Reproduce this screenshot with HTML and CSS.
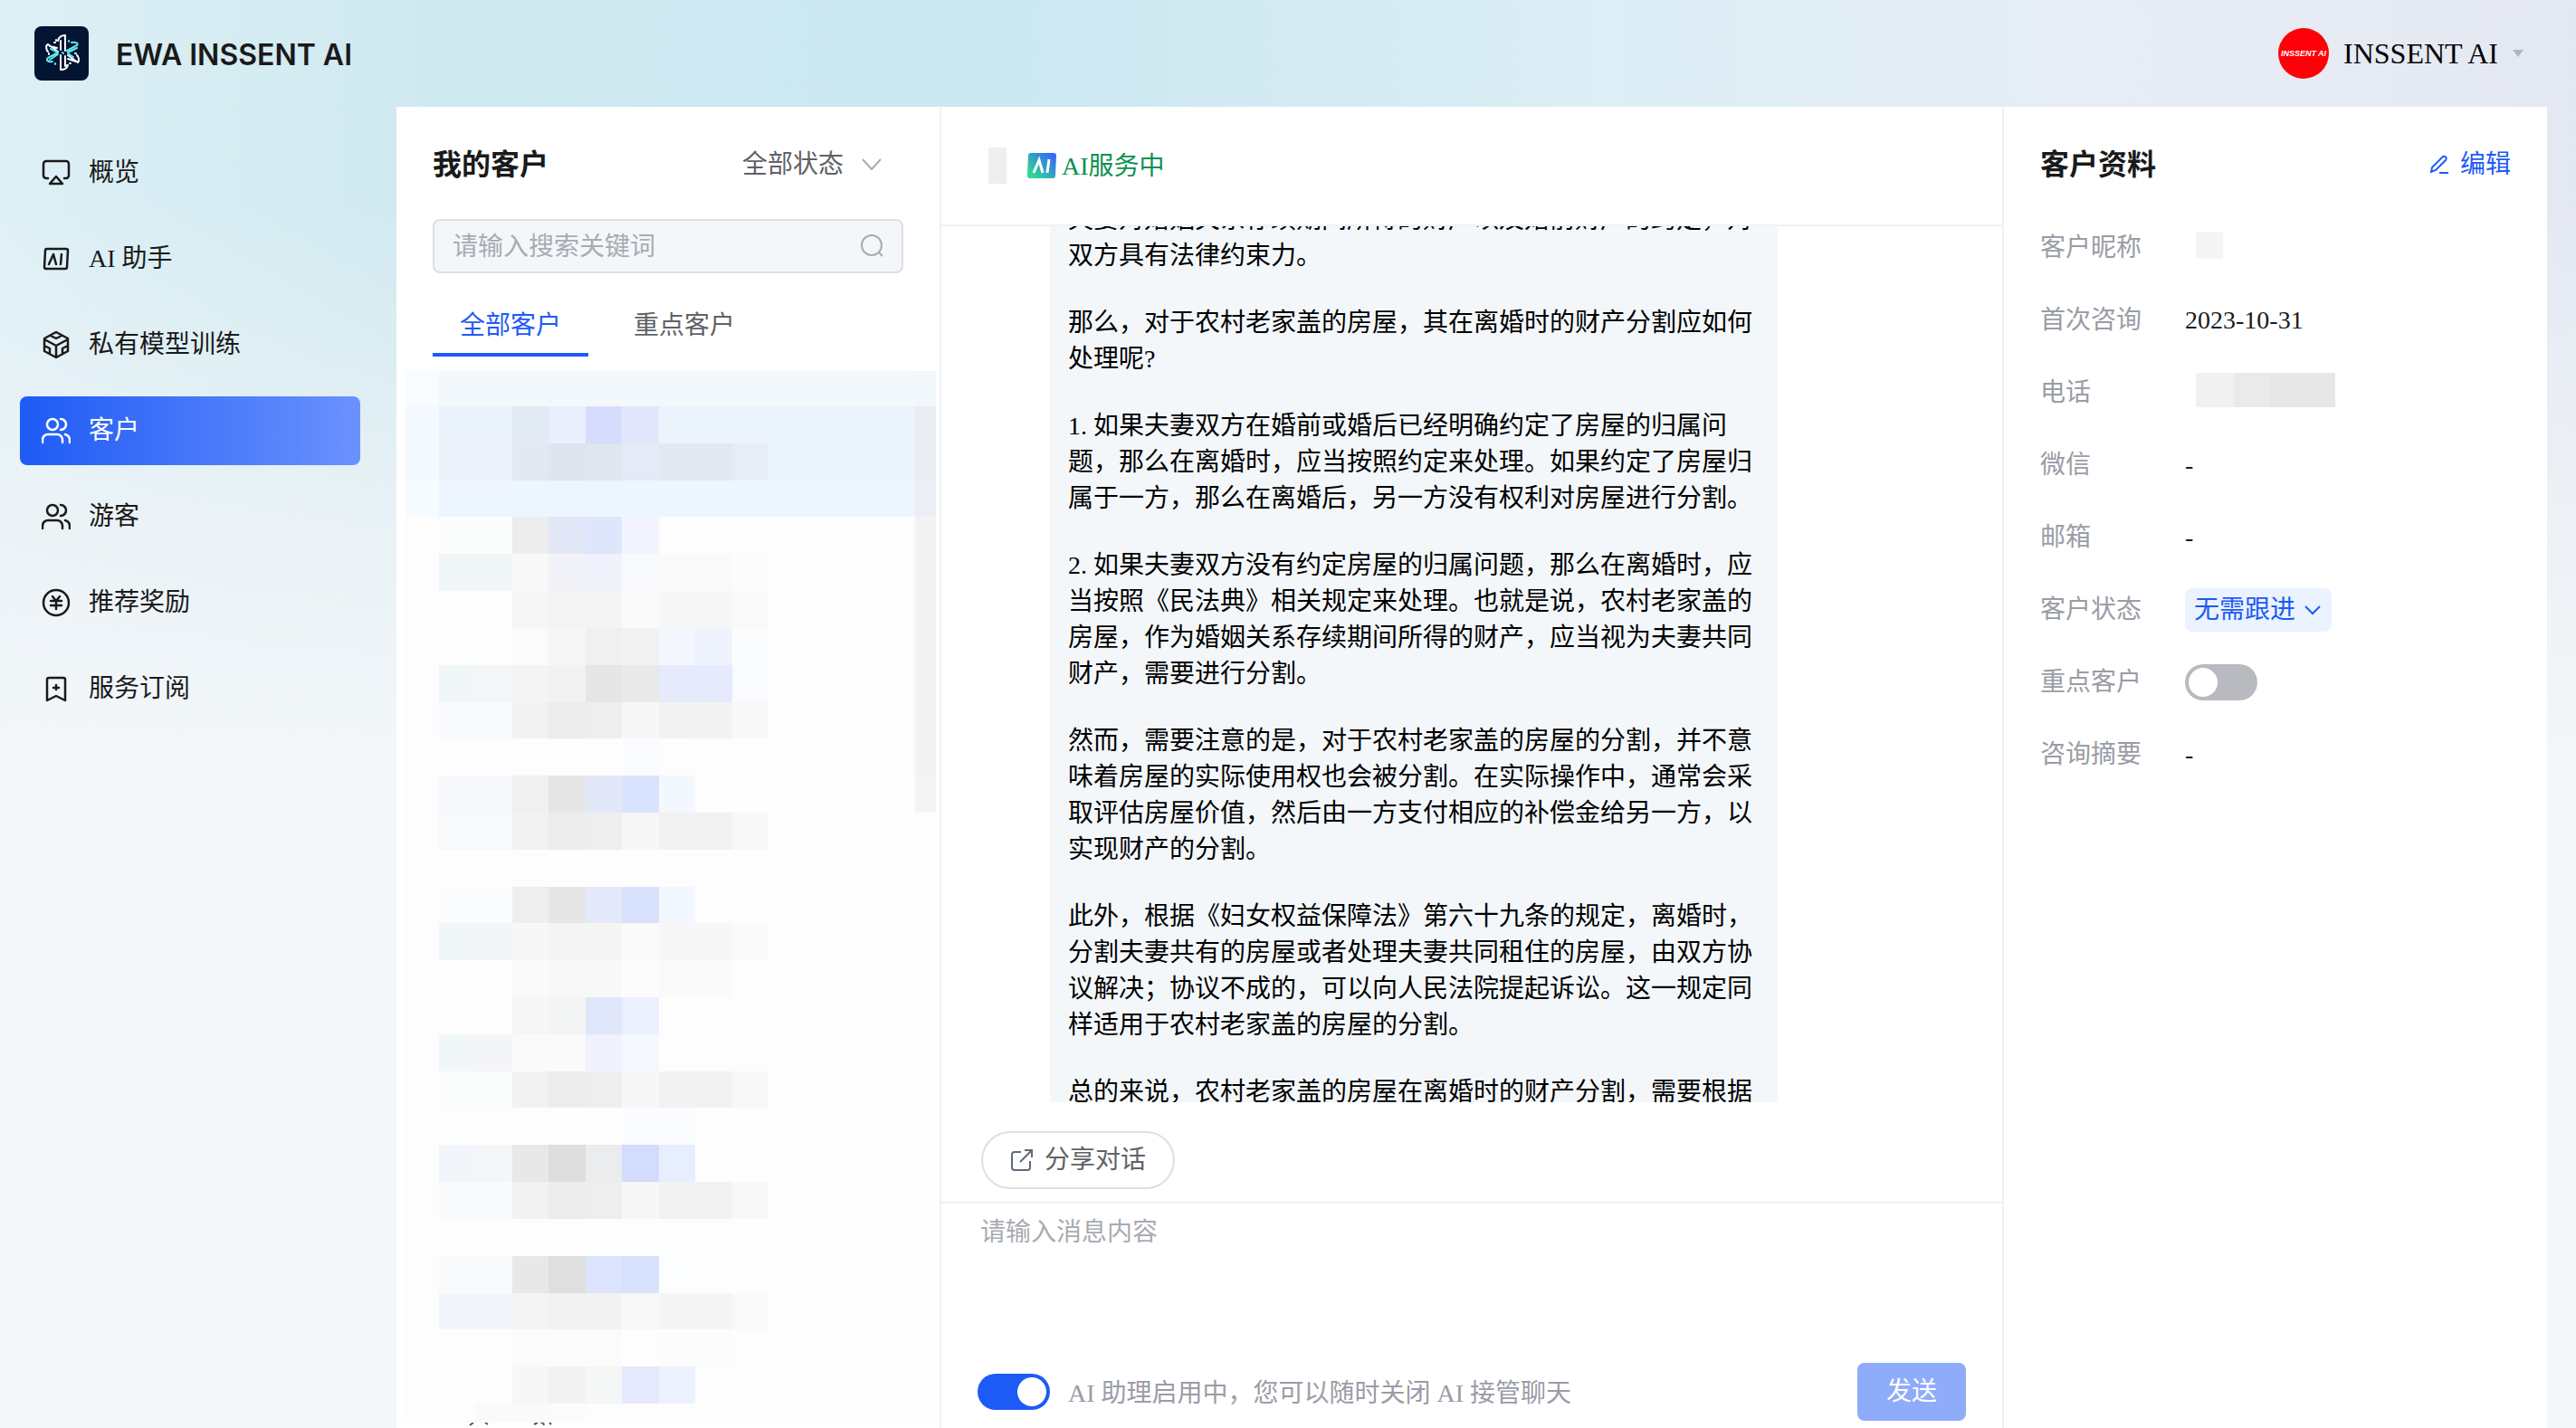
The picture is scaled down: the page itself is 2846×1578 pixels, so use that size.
FILE: index.html
```html
<!DOCTYPE html>
<html lang="zh-CN">
  <head>
    <meta charset="UTF-8">
    <title>EWA INSSENT AI</title>
    <link rel="stylesheet" href="styles.css">
  </head>
  <body>
    <header class="topbar">
      <a class="brand" href="#">
        <svg class="brand-logo" viewBox="0 0 60 60">
          <rect width="60" height="60" rx="8" fill="#021533"/>
          <g fill="none" stroke-width="2" stroke-linecap="round" stroke-linejoin="round">
            <path stroke="#fff" d="M29 26V16M26 16c1-4 4-6 8-6v17M34 33v11M37 43c-1 4-4 5-8 5V32M26 28l-11-8c-3 1-2 6 0 8M17 22l8 2M37 32l11 8c2-2 1-6-1-8M46 39l-9-3"/>
            <path stroke="#5fe8ee" d="M36 27l11-6c2-2-1-4-6-3M37 29l10-5M37 30l6 4M18 25l8 4-11 6c-3 2 0 5 5 4M26 31l-9 6M31 29l1 1"/>
            <path stroke="#fff" d="M24 15v1M22 18h1M16 30v1M36 43v1M39 41h1M45 30h1"/>
            <path stroke="#5fe8ee" d="M38 16v1M23 41v1"/>
          </g>
        </svg>
        <span class="brand-name">EWA INSSENT AI</span>
      </a>
      <button class="account" type="button">
        <span class="avatar">INSSENT AI</span>
        <span>INSSENT AI</span>
        <svg class="caret" viewBox="0 0 12 10"><path d="M0 1h12L6 9z" fill="#b1b5bf"/></svg>
      </button>
    </header>

    <div class="layout">
      <nav class="sidebar">
        <a class="nav-item" href="#">
          <svg class="icon" viewBox="0 0 32 32"><path d="M7 22H5a3 3 0 0 1-3-3V6a3 3 0 0 1 3-3h22a3 3 0 0 1 3 3v13a3 3 0 0 1-3 3h-2M16 20l-7 8h14z"/></svg>
          <span>概览</span>
        </a>
        <a class="nav-item" href="#">
          <svg class="icon" viewBox="0 0 32 32"><path d="M6 5h21a2 2 0 0 1 2 2l-1 18a2 2 0 0 1-2 2H5a2 2 0 0 1-2-2L4 7a2 2 0 0 1 2-2zM8 22l5-11 3 11M22 11l-1 11"/></svg>
          <span>AI 助手</span>
        </a>
        <a class="nav-item" href="#">
          <svg class="icon" viewBox="0 0 32 32"><path d="M16 2l13 7v14l-13 7-13-7V9zM3 10l13 7 13-7M16 17v13M10 6l6 3 6-3M3 17l6 3v6M29 17l-6 3v6"/></svg>
          <span>私有模型训练</span>
        </a>
        <a class="nav-item active" href="#">
          <svg class="icon" viewBox="0 0 32 32"><circle cx="12" cy="9" r="6"/><path d="M1 29v-3a6 6 0 0 1 6-6h10a6 6 0 0 1 6 6v3M21 3a6 6 0 0 1 0 12M26 20c3 1 5 3 5 6v3"/></svg>
          <span>客户</span>
        </a>
        <a class="nav-item" href="#">
          <svg class="icon" viewBox="0 0 32 32"><circle cx="12" cy="9" r="6"/><path d="M1 29v-3a6 6 0 0 1 6-6h10a6 6 0 0 1 6 6v3M21 3a6 6 0 0 1 0 12M26 20c3 1 5 3 5 6v3"/></svg>
          <span>游客</span>
        </a>
        <a class="nav-item" href="#">
          <svg class="icon" viewBox="0 0 32 32"><circle cx="16" cy="16" r="14"/><path d="M12 9l4 5 4-5M10 14h12M10 19h12M16 14v9"/></svg>
          <span>推荐奖励</span>
        </a>
        <a class="nav-item" href="#">
          <svg class="icon" viewBox="0 0 32 32"><path d="M6 29V6a2 2 0 0 1 2-2h16a2 2 0 0 1 2 2v23l-10-5zM16 12v5M13 15h6"/></svg>
          <span>服务订阅</span>
        </a>
      </nav>

      <main class="workspace">
        <section class="customers">
          <div class="customers-head">
            <h2>我的客户</h2>
            <select class="status-filter" aria-label="状态">
              <option>全部状态</option>
            </select>
            <svg class="chevron" viewBox="0 0 22 14"><path d="M1 1l10 11L21 1"/></svg>
          </div>
          <div class="search">
            <input type="text" placeholder="请输入搜索关键词" aria-label="搜索">
            <svg viewBox="0 0 26 26"><circle cx="13" cy="12" r="11"/><path d="M21 20l4 4"/></svg>
          </div>
          <div class="tabs">
            <button class="tab active" type="button">全部客户</button>
            <button class="tab" type="button">重点客户</button>
          </div>
          <div class="mosaic" id="customer-list"></div>
          <svg class="list-edge" viewBox="0 0 100 6"><path d="M1 3l4-3M18 0l3 2M72 2l4-2M79 0h3l1 3M89 0l2 2"/></svg>
        </section>

        <section class="chat">
          <div class="chat-head">
            <span class="chat-name"></span>
            <svg class="ai-badge" viewBox="0 0 32 28">
              <defs>
                <linearGradient id="badge" x1="0" y1="1" x2="1" y2="0">
                  <stop offset="0.1" stop-color="#2fdc8c"/>
                  <stop offset="0.9" stop-color="#3569fb"/>
                </linearGradient>
              </defs>
              <path d="M4 0h25a3 3 0 0 1 3 3l-1 22a3 3 0 0 1-3 3H3a3 3 0 0 1-3-3L1 3a3 3 0 0 1 3-3z" fill="url(#badge)"/>
              <path d="M7 22l6-14 4 14M24 7l-2 15" fill="none" stroke="#fff" stroke-width="3"/>
            </svg>
            <span class="chat-status">AI服务中</span>
          </div>
          <div class="messages" id="messages">
            <div class="bubble">
              <p>夫妻对婚姻关系存续期间所得的财产以及婚前财产的约定，对双方具有法律约束力。</p>
              <p>那么，对于农村老家盖的房屋，其在离婚时的财产分割应如何处理呢?</p>
              <p>1. 如果夫妻双方在婚前或婚后已经明确约定了房屋的归属问题，那么在离婚时，应当按照约定来处理。如果约定了房屋归属于一方，那么在离婚后，另一方没有权利对房屋进行分割。</p>
              <p>2. 如果夫妻双方没有约定房屋的归属问题，那么在离婚时，应当按照《民法典》相关规定来处理。也就是说，农村老家盖的房屋，作为婚姻关系存续期间所得的财产，应当视为夫妻共同财产，需要进行分割。</p>
              <p>然而，需要注意的是，对于农村老家盖的房屋的分割，并不意味着房屋的实际使用权也会被分割。在实际操作中，通常会采取评估房屋价值，然后由一方支付相应的补偿金给另一方，以实现财产的分割。</p>
              <p>此外，根据《妇女权益保障法》第六十九条的规定，离婚时，分割夫妻共有的房屋或者处理夫妻共同租住的房屋，由双方协议解决；协议不成的，可以向人民法院提起诉讼。这一规定同样适用于农村老家盖的房屋的分割。</p>
              <p>总的来说，农村老家盖的房屋在离婚时的财产分割，需要根据</p>
            </div>
          </div>
          <div class="chat-tools">
            <button class="share" type="button">
              <svg viewBox="0 0 26 26"><path d="M12 4H5a3 3 0 0 0-3 3v14a3 3 0 0 0 3 3h14a3 3 0 0 0 3-3v-7M16 2h8v8M24 2L11 15"/></svg>
              <span>分享对话</span>
            </button>
          </div>
          <div class="composer">
            <textarea placeholder="请输入消息内容" aria-label="消息内容"></textarea>
            <div class="composer-foot">
              <input class="switch" id="ai-on" type="checkbox" checked>
              <label for="ai-on">AI 助理启用中，您可以随时关闭 AI 接管聊天</label>
              <button class="send" type="button">发送</button>
            </div>
          </div>
        </section>

        <section class="profile">
          <div class="profile-head">
            <h2>客户资料</h2>
            <button class="edit" type="button">
              <svg viewBox="0 0 22 22"><path d="M2 19l1-5L15 2c2-1 5 1 3 4L7 17zM11 20h10"/></svg>
              <span>编辑</span>
            </button>
          </div>
          <dl class="fields">
            <dt>客户昵称</dt>
            <dd><span class="masked masked-name"></span></dd>
            <dt>首次咨询</dt>
            <dd>2023-10-31</dd>
            <dt>电话</dt>
            <dd><span class="masked masked-phone"></span></dd>
            <dt>微信</dt>
            <dd>-</dd>
            <dt>邮箱</dt>
            <dd>-</dd>
            <dt><label for="state">客户状态</label></dt>
            <dd>
              <span class="state">
                <select id="state">
                  <option>无需跟进</option>
                </select>
                <svg class="chevron" viewBox="0 0 22 14"><path d="M3 3l8 8 8-8"/></svg>
              </span>
            </dd>
            <dt><label for="vip">重点客户</label></dt>
            <dd><input class="switch" id="vip" type="checkbox"></dd>
            <dt>咨询摘要</dt>
            <dd>-</dd>
          </dl>
        </section>
      </main>
    </div>

    <script src="script.js"></script>
  </body>
</html>
```
FILE: styles.css
```css
*{
  box-sizing: border-box;
}
html, body{
  margin: 0;
  padding: 0;
  height: 100%;
}
body{
  display: flex;
  flex-flow: column;
  overflow: hidden;
  font-family: "Liberation Serif", "Noto Sans CJK SC", serif;
  font-size: 28px;
  line-height: 40px;
  color: #1a1a1a;
  text-spacing-trim: space-all;
  background:
    linear-gradient(to bottom, rgba(244,247,249,0) 14%, rgba(240,244,247,0.8) 38%, #f3f7fa 54%),
    linear-gradient(to right, #def0f6 0%, #cfe9f0 17%, #cae7f0 38%, #dceef6 62%, #e7edf5 82%, #e4e8f2 100%);
}
button, input, select, textarea{
  font: inherit;
  color: inherit;
  margin: 0;
  padding: 0;
  border: 0;
  background: none;
  outline: none;
}
button{
  cursor: pointer;
}
select{
  appearance: none;
}
a{
  color: inherit;
  text-decoration: none;
}
h2{
  margin: 0;
  font-size: 32px;
  line-height: 40px;
  font-weight: 700;
}
svg{
  display: block;
  flex: none;
}

/* top bar */
.topbar{
  display: flex;
  align-items: center;
  justify-content: space-between;
  flex: none;
  height: 118px;
  padding: 0 58px 0 38px;
}
.brand{
  display: flex;
  align-items: center;
  gap: 30px;
}
.brand-logo{
  width: 60px;
  height: 60px;
}
.brand-name{
  padding-top: 4px;
  font-family: Inter, "Liberation Sans", sans-serif;
  font-size: 32px;
  font-weight: 600;
}
.account{
  display: flex;
  align-items: center;
  gap: 16px;
  font-size: 32px;
  color: #000;
}
.avatar{
  display: flex;
  align-items: center;
  justify-content: center;
  width: 56px;
  height: 56px;
  border-radius: 50%;
  background: #ff0008;
  color: #fff;
  font-family: "Liberation Sans", sans-serif;
  font-size: 9px;
  font-weight: 700;
  font-style: italic;
  white-space: nowrap;
}
.caret{
  width: 12px;
  height: 10px;
}

.layout{
  display: flex;
  flex: 1;
  min-height: 0;
}

/* side menu */
.sidebar{
  display: flex;
  flex-flow: column;
  gap: 19px;
  flex: none;
  width: 438px;
  padding: 35px 40px 0 22px;
}
.nav-item{
  display: flex;
  align-items: center;
  gap: 20px;
  height: 76px;
  padding: 0 24px;
  border-radius: 8px;
}
.nav-item.active{
  color: #fff;
  background: linear-gradient(to right, #1e5af5, #6b92fe);
}
.icon{
  width: 32px;
  height: 32px;
  fill: none;
  stroke: currentColor;
  stroke-width: 2.5;
  stroke-linecap: round;
  stroke-linejoin: round;
}

/* three panels */
.workspace{
  display: flex;
  flex: 1;
  min-width: 0;
  margin-right: 32px;
  background: #fff;
}
.customers{
  display: flex;
  flex-flow: column;
  flex: none;
  width: 602px;
  padding-top: 44px;
  border-right: 2px solid #eef2f6;
}
.customers-head{
  display: flex;
  align-items: center;
  padding: 0 64px 0 40px;
}
.status-filter{
  width: 112px;
  margin-left: auto;
  color: #606266;
}
.chevron{
  width: 22px;
  height: 14px;
  margin-left: 20px;
  fill: none;
  stroke: #a8abb2;
  stroke-width: 2;
}
.search{
  display: flex;
  align-items: center;
  height: 60px;
  margin: 40px 40px 0;
  padding: 0 20px;
  border: 2px solid #dcdfe6;
  border-radius: 8px;
  background: #f3f7fa;
}
.search input{
  flex: 1;
  min-width: 0;
  padding-top: 2px;
}
::placeholder{
  color: #a8abb2;
  opacity: 1;
}
.search svg{
  width: 26px;
  height: 26px;
  fill: none;
  stroke: #a8abb2;
  stroke-width: 2;
}
.tabs{
  display: flex;
  gap: 20px;
  padding: 20px 40px 16px;
}
.tab{
  height: 72px;
  padding: 8px 30px 0;
  border-bottom: 4px solid transparent;
  color: #606266;
}
.tab.active{
  color: #1e5af5;
  border-color: #1e5af5;
}
.mosaic{
  display: grid;
  grid-template-columns: 37px repeat(13, 1fr) 23px;
  grid-template-rows: 39px repeat(27, 1fr) 21px;
  flex: 1;
  min-height: 0;
  margin: 0 4px 0 10px;
  background: #fdfdfd;
}
.list-edge{
  width: 100px;
  height: 6px;
  margin-left: 80px;
  fill: none;
  stroke: #555;
  stroke-width: 2;
}

/* conversation */
.chat{
  display: flex;
  flex-flow: column;
  flex: 1;
  min-width: 0;
  border-right: 2px solid #eef2f6;
}
.chat-head{
  display: flex;
  align-items: center;
  flex: none;
  height: 132px;
  padding-left: 52px;
  border-bottom: 2px solid #eef2f6;
}
.chat-name{
  width: 20px;
  height: 40px;
  margin-right: 23px;
  background: #eee;
}
.ai-badge{
  width: 32px;
  height: 28px;
  margin-right: 6px;
}
.chat-status{
  padding-top: 2px;
  color: #0b9150;
}
.messages{
  flex: 1;
  min-height: 0;
  overflow: hidden;
  padding: 0 248px 0 120px;
}
.bubble{
  padding: 20px;
  background: #f3f7fa;
  color: #000;
}
.bubble p{
  margin: 0 0 34px;
}
.bubble p:last-child{
  margin: 0;
}
.chat-tools{
  flex: none;
  padding: 32px 44px 14px;
}
.share{
  display: flex;
  align-items: center;
  gap: 12px;
  height: 64px;
  padding: 0 30px;
  border: 2px solid #dcdfe6;
  border-radius: 32px;
  color: #606266;
}
.share svg{
  width: 26px;
  height: 26px;
  fill: none;
  stroke: #606a78;
  stroke-width: 2;
}
.composer{
  display: flex;
  flex-flow: column;
  flex: none;
  height: 250px;
  padding: 12px 40px 8px;
  border-top: 2px solid #eef2f6;
}
.composer textarea{
  flex: 1;
  padding: 0 3px;
  resize: none;
}
.composer-foot{
  display: flex;
  align-items: center;
  color: #9a9ca6;
}
.composer-foot label{
  margin-left: 20px;
  padding-top: 4px;
}
.switch{
  appearance: none;
  flex: none;
  display: block;
  width: 80px;
  height: 40px;
  padding: 4px;
  border-radius: 20px;
  background: #b9babf;
}
.switch::before{
  content: "";
  display: block;
  width: 32px;
  height: 32px;
  border-radius: 50%;
  background: #fff;
}
.switch:checked{
  background: #1e5af5;
}
.switch:checked::before{
  margin-left: auto;
}
.send{
  width: 120px;
  height: 64px;
  margin-left: auto;
  border-radius: 8px;
  color: #fff;
  background: #8facfa;
}

/* customer profile */
.profile{
  flex: none;
  width: 600px;
  padding: 44px 40px 0;
}
.profile-head{
  display: flex;
  align-items: center;
  justify-content: space-between;
}
.edit{
  display: flex;
  align-items: center;
  gap: 12px;
  color: #1e5af5;
}
.edit svg{
  width: 22px;
  height: 22px;
  fill: none;
  stroke: currentColor;
  stroke-width: 2;
}
.fields{
  display: grid;
  grid-template-columns: 160px 1fr;
  grid-auto-rows: 80px;
  align-items: center;
  margin: 32px 0 0;
}
.fields dt{
  color: #9a9ca6;
}
.fields dd{
  display: flex;
  align-items: center;
  margin: 0;
}
.masked{
  height: 38px;
  margin: 0 0 6px 12px;
}
.masked-name{
  width: 30px;
  height: 30px;
  background: #f5f5f5;
}
.masked-phone{
  width: 154px;
  background: linear-gradient(to right, #f1f1f1 0 27%, #eaeaea 27% 53%, #e7e7e7 53%);
}
.state{
  display: flex;
  align-items: center;
  height: 48px;
  padding: 0 10px;
  border-radius: 8px;
  background: #eaf3fe;
  color: #1e5af5;
}
.state select{
  width: 112px;
}
.state .chevron{
  margin-left: 8px;
  stroke: currentColor;
}
```
FILE: script.js
```javascript
// one entry per row of the blurred list, one colour per column from the left
var rows = [
  '#f8fcff 13*#f3f8fd #f2f7fb',
  '#f3f9fe 2*#eaf3fb #e2eaf3 #e9effc #d6dcfb #e2e7fb 7*#ebf3fd #eaedf2',
  '#f3f9fe 2*#ecf1fa #e2e9f2 #dee5ee #dfe6ef #e4ebf6 2*#e2e9f2 #e6edf6 4*#ebf3fd #eaedf2',
  '#f5fbff 13*#edf6ff #ebeff5',
  '- 2*#fbfdfc #ededed #e2e8f8 #dee6fc #f3f5fe 7*- #f3f3f3',
  '- 2*#f1f6f9 #f8f8f8 #f2f3f8 #eff1fb #f8f9fc 2*#fafafa #fcfcfc 4*- #f3f3f3',
  '3*- #f6f6f6 2*#f4f4f4 #fafafa 2*#f7f7f7 #f9f9f9 4*- #f3f3f3',
  '3*- #fbfbfb #f6f6f6 #f0f0f0 #f2f2f2 #f4f7fe #eff3fe #fbfcfe 4*- #f3f3f3',
  '- #f1f6f9 #f4f6fa #f4f4f4 #f2f2f2 #e6e6e6 #e9e9e9 #e6ebfb #e5ebfc #fafbfe 4*- #f3f3f3',
  '- 2*#f9fafd #f2f2f2 #ececec #eeeeee #f7f7f7 #f2f2f2 #f3f3f3 #f8f8f8 4*- #f3f3f3',
  '6*- #fbfcff 7*- #f3f3f3',
  '- 2*#f6f8fb #f0f0f0 #e6e6e6 #e2e8f8 #d9e3fd #f3f7fe 6*- #f5f5f5',
  '- 2*#f7f9fb #f2f2f2 #ececec #eeeeee #f7f7f7 2*#f2f2f2 #f8f8f8 5*-',
  '15*-',
  '- 2*#fafbfd #eeeeee #e6e6e6 #e3e9f8 #d8e1fc #f3f7ff 7*-',
  '- #f1f6f9 #f4f5f8 #f7f7f7 2*#f4f4f4 #fafafa 2*#f7f7f7 #fafafa 5*-',
  '3*- #fafafa 2*#f8f8f8 #fcfcfc 2*#fafafa 6*-',
  '3*- #f6f6f6 #f3f5f4 #e1e7fb #eaf0fd 8*-',
  '- #f1f6f9 #f4f5f8 2*#fafafa #f0f2fe #f5f8fe 8*-',
  '- 2*#fafdfc #f2f2f2 #ececec #eeeeee #f7f7f7 2*#f2f2f2 #f8f8f8 5*-',
  '6*- 2*#fbfcff 7*-',
  '- #f2f6fa #f5f6f9 #e8e8e8 #dedede #ebecee #d2dcfc #e7eefe 7*-',
  '- 2*#f8fafc #f2f2f2 #ececec #eeeeee #f7f7f7 2*#f2f2f2 #f8f8f8 5*-',
  '15*-',
  '- 2*#f9fafc #e8e8e8 #dfdfdf #dce4fe #d8e2fd #fbfdff 7*-',
  '- 2*#f2f6fa #f4f4f4 2*#f2f2f2 #f8f8f8 2*#f5f5f5 #f9f9f9 5*-',
  '3*- 3*#fbfbfb - 2*#fcfcfc 6*-',
  '3*- #f7f7f7 #f2f2f2 #f5f7f6 #e4e9fd #ecf2fe 7*-',
  '2*- 2*#fafafa #fbfbfb 10*-'
];

var list = document.getElementById('customer-list');
rows.forEach(function(row){
  row.split(' ').forEach(function(part){
    var bits = part.split('*');
    var color = bits.pop();
    var count = parseInt(bits[0] || 1, 10);
    for (var i = 0; i < count; i++) {
      var cell = document.createElement('i');
      if (color !== '-') {
        cell.style.background = color;
      }
      list.appendChild(cell);
    }
  });
});

document.getElementById('messages').scrollTop = 47;
```
